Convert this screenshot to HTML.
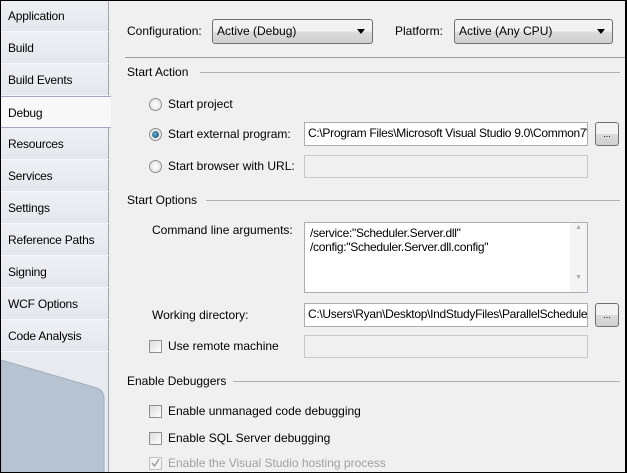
<!DOCTYPE html>
<html><head><meta charset="utf-8"><style>
*{margin:0;padding:0;box-sizing:border-box}
body{width:627px;height:473px;overflow:hidden;background:#000;font-family:"Liberation Sans",sans-serif;font-size:12px;color:#000}
#f{position:absolute;left:1px;top:1px;width:624px;height:471px;background:#f0f0f0;overflow:hidden}
.a{position:absolute;white-space:nowrap}
.tab{position:absolute;left:0;width:108px;height:32px;background:linear-gradient(#eef0f4,#e3e7ed);border-bottom:1px solid #f6f7f9;border-right:1px solid #a0a7b2;padding:9px 0 0 7px;letter-spacing:-0.2px}
.sel{background:#f8f8f8;width:110px;border-right:none;border-top:1px solid #a0a7b2;border-bottom:1px solid #a0a7b2}
.line{position:absolute;height:1px;background:#a0a0a0}
.box{position:absolute;background:#fff;border:1px solid #abadb3;padding:3px 0 0 3px;overflow:hidden;white-space:nowrap;letter-spacing:-0.3px}
.dis{background:#f0f0f0;border-color:#c8c8c8}
.combo{position:absolute;border:1px solid #707070;border-radius:3px;background:linear-gradient(#f2f2f2 50%,#dcdcdc 50%,#cfcfcf);padding:4px 0 0 4px}
.combo:after{content:"";position:absolute;right:7px;top:9px;border:4px solid transparent;border-top:5px solid #000;border-bottom:0}
.btn{position:absolute;width:24px;height:24px;border:1px solid #707070;border-radius:3px;background:linear-gradient(#f2f2f2 50%,#dcdcdc 50%,#cfcfcf);font-size:9px;text-align:center;line-height:22px}
.rad{position:absolute;width:13px;height:13px;border-radius:50%;border:1px solid #8f8f8f;background:radial-gradient(#fff,#dcdcdc)}
.chk{position:absolute;width:13px;height:13px;border:1px solid #8f8f8f;background:linear-gradient(135deg,#dcdcdc,#fff)}
</style></head><body><div id="f">
<div class="tab" style="top:-1px">Application</div>
<div class="tab" style="top:31px">Build</div>
<div class="tab" style="top:63px">Build Events</div>
<div class="tab sel" style="top:95px">Debug</div>
<div class="tab" style="top:127px">Resources</div>
<div class="tab" style="top:159px">Services</div>
<div class="tab" style="top:191px">Settings</div>
<div class="tab" style="top:223px">Reference Paths</div>
<div class="tab" style="top:255px">Signing</div>
<div class="tab" style="top:287px">WCF Options</div>
<div class="tab" style="top:319px">Code Analysis</div>
<div class="a" style="left:0;top:351px;width:108px;height:130px;background:#e7eaee;border-right:1px solid #a0a7b2"></div>
<svg class="a" style="left:0;top:355px" width="108" height="120"><path d="M0 4 L96 32 Q103 35 103 42 L103 120 L0 120Z" fill="#b8c3d2" stroke="#a3aebd"/></svg>

<div class="a" style="left:126px;top:23px">Configuration:</div>
<div class="combo" style="left:211px;top:18px;width:161px;height:25px">Active (Debug)</div>
<div class="a" style="left:394px;top:23px">Platform:</div>
<div class="combo" style="left:453px;top:18px;width:159px;height:25px">Active (Any CPU)</div>
<div class="line" style="left:124px;top:56px;width:500px"></div>

<div class="a" style="left:126px;top:64px">Start Action</div>
<div class="line" style="left:199px;top:71px;width:420px;background:#b0b0b0"></div>
<div class="rad" style="left:148px;top:97px"></div><div class="a" style="left:167px;top:96px">Start project</div>
<div class="rad" style="left:148px;top:127px"><div style="position:absolute;left:2px;top:2px;width:7px;height:7px;border-radius:50%;background:radial-gradient(circle at 40% 40%,#6ac,#146)"></div></div>
<div class="a" style="left:167px;top:126px">Start external program:</div>
<div class="box" style="left:303px;top:121px;width:284px;height:24px">C:\Program Files\Microsoft Visual Studio 9.0\Common7\IDE</div>
<div class="btn" style="left:594px;top:121px">...</div>
<div class="rad" style="left:148px;top:159px"></div><div class="a" style="left:167px;top:158px">Start browser with URL:</div>
<div class="box dis" style="left:303px;top:154px;width:284px;height:23px"></div>

<div class="a" style="left:126px;top:192px">Start Options</div>
<div class="line" style="left:205px;top:199px;width:414px;background:#b0b0b0"></div>
<div class="a" style="left:151px;top:222px">Command line arguments:</div>
<div class="box" style="left:303px;top:221px;width:284px;height:71px;line-height:14px;padding-left:5px">/service:"Scheduler.Server.dll"<br>/config:"Scheduler.Server.dll.config"
<div style="position:absolute;right:0;top:0;width:17px;height:69px;background:#f4f4f4;color:#aaa;font-size:7px;text-align:center;line-height:10px">▲<br><br><br><br><br>▼</div></div>
<div class="a" style="left:151px;top:307px">Working directory:</div>
<div class="box" style="left:303px;top:302px;width:284px;height:24px">C:\Users\Ryan\Desktop\IndStudyFiles\ParallelScheduler</div>
<div class="btn" style="left:594px;top:302px">...</div>
<div class="chk" style="left:148px;top:339px"></div><div class="a" style="left:167px;top:338px">Use remote machine</div>
<div class="box dis" style="left:303px;top:334px;width:284px;height:23px"></div>

<div class="a" style="left:126px;top:373px">Enable Debuggers</div>
<div class="line" style="left:232px;top:380px;width:387px;background:#b0b0b0"></div>
<div class="chk" style="left:148px;top:404px"></div><div class="a" style="left:167px;top:403px">Enable unmanaged code debugging</div>
<div class="chk" style="left:148px;top:431px"></div><div class="a" style="left:167px;top:430px">Enable SQL Server debugging</div>
<div class="chk" style="left:148px;top:456px;border-color:#c0c0c0;background:#f4f4f4"><svg width="11" height="11" style="position:absolute;left:0;top:0"><path d="M2 5 L4.5 8 L9 1" stroke="#a0a0a0" stroke-width="1.5" fill="none"/></svg></div>
<div class="a" style="left:167px;top:455px;color:#a0a0a0">Enable the Visual Studio hosting process</div>
</div></body></html>
